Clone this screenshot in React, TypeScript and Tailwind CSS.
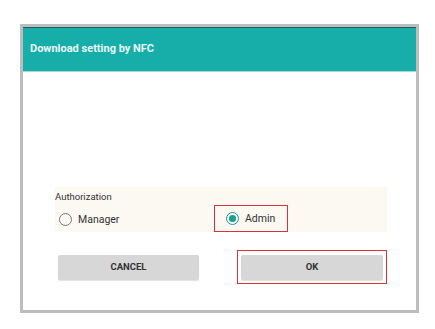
export default function App() {
  return (
    <div className="w-[435px] h-[329px] bg-white pt-[24px] pl-[20px] font-['Roboto','Liberation_Sans',sans-serif]">
      <div className="w-[399px] h-[289px] border-[3px] border-[#bdbdbd] bg-white flex flex-col">
        {/* Header */}
        <div className="h-[45px] bg-[#17aea9] border-t border-[#1f5d5a] border-b border-b-[#9fdcd8] flex items-center pl-[7px]">
          <span className="text-[11px] font-bold text-[#e8f8f7]">Download setting by NFC</span>
        </div>

        {/* Authorization */}
        <div className="mt-[115px] ml-[32px] w-[332px] h-[45px] bg-[#fcf9f3] pt-[3px]">
          <div className="text-[9.5px] text-[#333] leading-[14px]">Authorization</div>
          <div className="flex items-center mt-[3px]">
            <div className="flex items-center gap-[6px] w-[159px] pl-[4px]">
              <span className="w-[13px] h-[13px] rounded-full border-[1.5px] border-[#777]" />
              <span className="text-[10.5px] text-[#333]">Manager</span>
            </div>
            <div className="flex items-center gap-[6px] border border-[#d9323c] h-[27px] w-[74px] pl-[11px] -mt-[2px]">
              <span className="w-[13px] h-[13px] rounded-full border-[1.5px] border-[#1a9d94] flex items-center justify-center">
                <span className="w-[7px] h-[7px] rounded-full bg-[#1a9d94]" />
              </span>
              <span className="text-[10.5px] text-[#333]">Admin</span>
            </div>
          </div>
        </div>

        {/* Buttons */}
        <div className="flex items-center mt-[18px] ml-[35px]">
          <button className="w-[141px] h-[25px] bg-[#d7d7d7] rounded-[2px] text-[9.5px] font-bold text-[#333] shadow-[0_1px_1px_rgba(0,0,0,0.12)]">
            CANCEL
          </button>
          <div className="ml-[38px] border border-[#d9323c] w-[150px] h-[34px] flex items-center justify-center">
            <button className="w-[142px] h-[25px] bg-[#d7d7d7] rounded-[2px] text-[9.5px] font-bold text-[#333] shadow-[0_1px_1px_rgba(0,0,0,0.12)]">
              OK
            </button>
          </div>
        </div>
      </div>
    </div>
  );
}
